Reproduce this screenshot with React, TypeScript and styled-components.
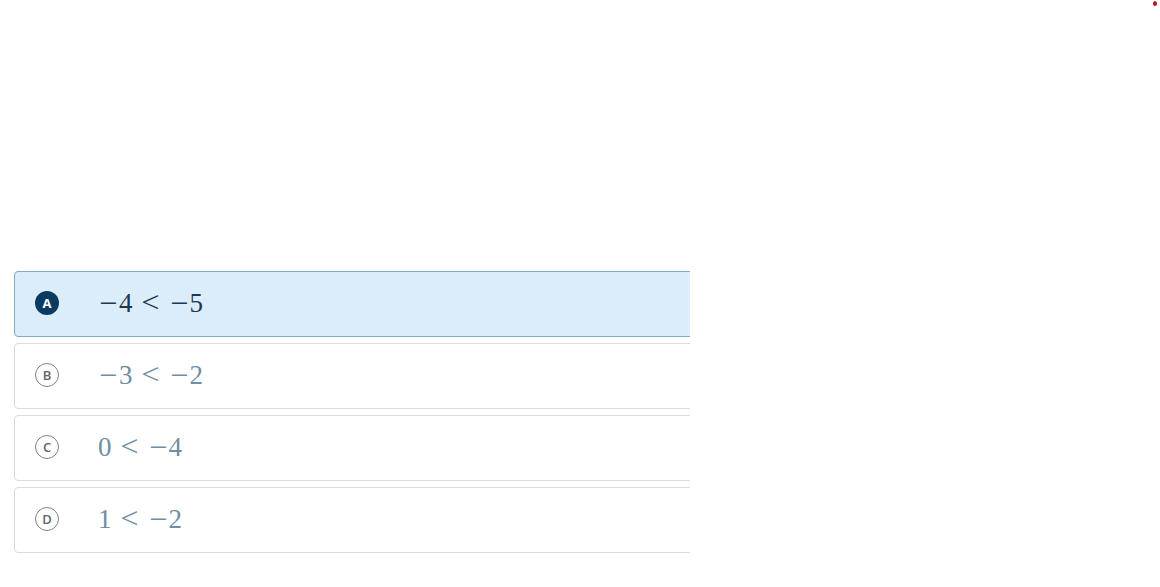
import React from 'react'
import styled, { createGlobalStyle } from 'styled-components'

const GlobalStyle = createGlobalStyle`
  html, body {
    margin: 0;
    padding: 0;
    background: #ffffff;
  }
  body {
    font-family: 'Lato', 'Liberation Sans', sans-serif;
  }
`

type Choice = {
  letter: string
  parts: string[]
}

const choices: Choice[] = [
  { letter: 'A', parts: ['−', '4', '<', '−', '5'] },
  { letter: 'B', parts: ['−', '3', '<', '−', '2'] },
  { letter: 'C', parts: ['0', '<', '−', '4'] },
  { letter: 'D', parts: ['1', '<', '−', '2'] },
]

const Page = styled.div`
  position: relative;
  width: 1160px;
  height: 587px;
  overflow: hidden;
  padding: 271px 0 0 14px;
  box-sizing: border-box;
`

const List = styled.div`
  width: 676px;
  overflow: hidden;
  display: flex;
  flex-direction: column;
  gap: 6px;
`

const Card = styled.div<{ $selected?: boolean }>`
  width: 720px;
  height: 66px;
  box-sizing: border-box;
  display: flex;
  align-items: center;
  padding-left: 20px;
  padding-bottom: 2px;
  border: 1px solid ${(p) => (p.$selected ? '#80aac6' : '#dcdcdc')};
  border-radius: 4px;
  background: ${(p) => (p.$selected ? '#dbedfb' : '#ffffff')};
`

const Badge = styled.div<{ $selected?: boolean }>`
  width: 24px;
  height: 24px;
  box-sizing: border-box;
  border-radius: 50%;
  display: flex;
  align-items: center;
  justify-content: center;
  font-family: 'Open Sans', 'Lato', sans-serif;
  font-size: 13px;
  font-weight: ${(p) => (p.$selected ? 700 : 600)};
  color: ${(p) => (p.$selected ? '#ffffff' : '#5f6368')};
  background: ${(p) => (p.$selected ? '#0b3b60' : 'transparent')};
  border: ${(p) => (p.$selected ? 'none' : '1px solid #808080')};
`

const Math = styled.div<{ $selected?: boolean }>`
  margin-left: 39px;
  display: flex;
  align-items: baseline;
  font-family: 'Liberation Serif', 'DejaVu Serif', serif;
  font-size: 27px;
  line-height: 1;
  color: ${(p) => (p.$selected ? '#1e3850' : '#6f8ea4')};
`

const Sym = styled.span<{ $rel?: boolean }>`
  display: inline-block;
  width: 0.778em;
  text-align: center;
  margin: ${(p) => (p.$rel ? '0 0.278em' : '0')};
  transform: ${(p) => (p.$rel ? 'scale(1.2, 1.1)' : 'scaleX(1.2)')};
  transform-origin: 50% 70%;
`

const Digit = styled.span`
  display: inline-block;
  width: 0.5em;
  text-align: center;
`

const Dot = styled.div`
  position: absolute;
  top: 1px;
  right: 3px;
  width: 4px;
  height: 5px;
  border-radius: 50%;
  background: #b8141a;
`

export default function App() {
  return (
    <Page>
      <GlobalStyle />
      <Dot />
      <List>
        {choices.map((c, i) => {
          const sel = i === 0
          return (
            <Card key={c.letter} $selected={sel}>
              <Badge $selected={sel}>{c.letter}</Badge>
              <Math $selected={sel}>
                {c.parts.map((p, j) =>
                  /\d/.test(p) ? (
                    <Digit key={j}>{p}</Digit>
                  ) : (
                    <Sym key={j} $rel={p === '<'}>
                      {p}
                    </Sym>
                  )
                )}
              </Math>
            </Card>
          )
        })}
      </List>
    </Page>
  )
}
